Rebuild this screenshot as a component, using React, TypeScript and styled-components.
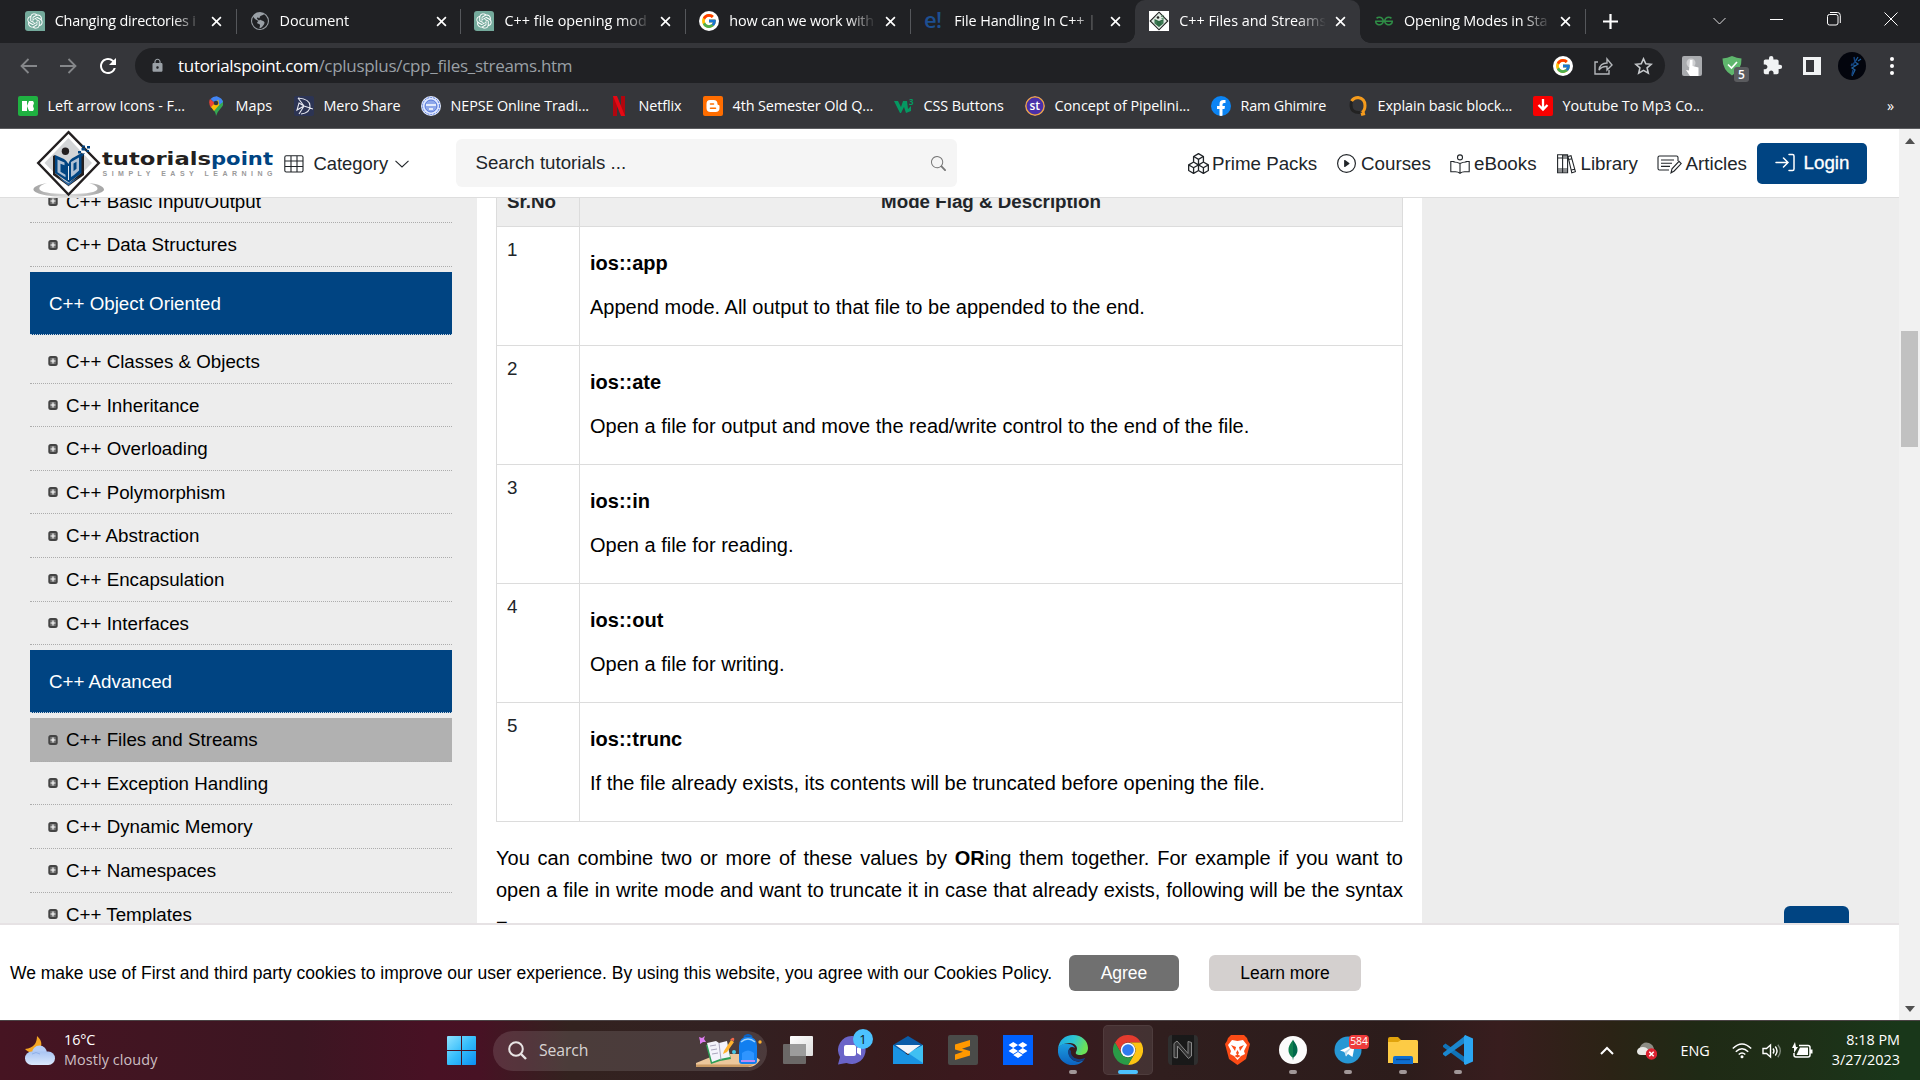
import React from 'react';
import styled, { createGlobalStyle, css } from 'styled-components';
import { SiOpenai, SiGeeksforgeeks, SiDropbox } from 'react-icons/si';
import { FcGoogle } from 'react-icons/fc';
import { BsBoxes, BsPlayCircle, BsSearch, BsGlobeAmericas } from 'react-icons/bs';
import { MdExtension, MdLock, MdRefresh } from 'react-icons/md';

const UI = `"Open Sans", "Noto Sans", sans-serif`;
const ARIAL = `"Liberation Sans", Arial, sans-serif`;
const NAVY = '#004482';

const Global = createGlobalStyle`
  * { box-sizing: border-box; }
  body { margin: 0; background: #202124; overflow: hidden; }
  svg { display: block; flex: none; }
`;

const Screen = styled.div`
  width: 1920px;
  height: 1080px;
  display: flex;
  flex-direction: column;
  overflow: hidden;
`;

const Slot = styled.span<{ $w: number; $c?: string }>`
  flex: none;
  width: ${p => p.$w}px;
  height: 100%;
  display: flex;
  align-items: center;
  justify-content: center;
  color: ${p => p.$c || '#fff'};
  position: relative;
`;

const Spacer = styled.span<{ $w?: number }>`
  flex: ${p => (p.$w ? `none` : 1)};
  width: ${p => p.$w || 0}px;
`;

/* ---------- Browser chrome ---------- */

const TabStrip = styled.div`
  flex: none;
  height: 43px;
  display: flex;
  align-items: stretch;
  padding: 0 1px 0 10.7px;
  background: #202124;
  font-family: ${UI};
`;

const Tab = styled.div<{ $active?: boolean; $sep?: boolean }>`
  position: relative;
  flex: none;
  width: 224.9px;
  display: flex;
  align-items: center;
  padding: 0 10px 1px 14px;
  ${p => p.$sep && css`
    &::after { content: ''; position: absolute; right: -1px; top: 9px; width: 1px; height: 25px; background: #55575b; }
  `}
  ${p => p.$active && css`
    background: #35363a;
    border-radius: 10px 10px 0 0;
    &::before, &::after { content: ''; position: absolute; bottom: 0; width: 10px; height: 10px; }
    &::before { left: -10px; background: radial-gradient(circle at 0 0, #202124 9.5px, #35363a 10px); }
    &::after { right: -10px; background: radial-gradient(circle at 100% 0, #202124 9.5px, #35363a 10px); }
  `}
`;

const TabIcon = styled.span`
  flex: none;
  width: 20px;
  height: 20px;
  margin-right: 10px;
  display: flex;
  align-items: center;
  justify-content: center;
`;

const TabTitle = styled.span<{ $ls?: number }>`
  flex: none;
  width: 147px;
  overflow: hidden;
  white-space: nowrap;
  font-size: 14.4px;
  line-height: 22px;
  letter-spacing: ${p => p.$ls ?? -0.2}px;
  color: #fff;
  mask-image: linear-gradient(90deg, #000 118px, transparent 147px);
`;

const TabClose = styled.span`
  margin-left: 9px;
`;

const Toolbar = styled.div`
  flex: none;
  height: 45px;
  padding: 0 8px;
  display: flex;
  align-items: center;
  background: #35363a;
  font-family: ${UI};
`;

const Omnibox = styled.div`
  flex: none;
  width: 1530px;
  height: 35px;
  margin-left: 7px;
  padding: 0 2px 0 15px;
  border-radius: 18px;
  display: flex;
  align-items: center;
  background: #202124;
`;

const Url = styled.span`
  margin-left: 13px;
  font-size: 17px;
  letter-spacing: -0.3px;
  white-space: nowrap;
  color: #9aa0a6;
  b { font-weight: 400; color: #fff; }
`;

const ExtBadge = styled.span`
  position: absolute;
  left: 22px;
  top: 24px;
  width: 15px;
  height: 15px;
  border-radius: 3px;
  background: #5a5b5e;
  color: #fff;
  font: 600 12px/15px ${UI};
  text-align: center;
`;

const Bookmarks = styled.div`
  flex: none;
  height: 41px;
  padding: 0 19px 4px 18px;
  display: flex;
  align-items: center;
  background: #35363a;
  border-bottom: 1px solid #5c5d60;
  font-family: ${UI};
`;

const Bookmark = styled.div<{ $w: number; $ls?: number }>`
  flex: none;
  width: ${p => p.$w}px;
  display: flex;
  align-items: center;
  gap: 9.5px;
  font-size: 14.4px;
  line-height: 22px;
  letter-spacing: ${p => p.$ls ?? -0.1}px;
  white-space: nowrap;
  color: #fff;
`;

const BmIcon = styled.span<{ $bg?: string; $round?: boolean }>`
  flex: none;
  width: 20px;
  height: 20px;
  display: flex;
  align-items: center;
  justify-content: center;
  overflow: hidden;
  border-radius: ${p => (p.$round ? '50%' : '2px')};
  background: ${p => p.$bg || 'transparent'};
`;

/* ---------- Page ---------- */

const Viewport = styled.div`
  flex: none;
  height: 891px;
  display: flex;
  font-family: ${ARIAL};
  font-size: 18.75px;
  color: #000;
`;

const Page = styled.div`
  width: 1899px;
  height: 891px;
  display: flex;
  flex-direction: column;
  background: #ededed;
`;

const Header = styled.header`
  flex: none;
  height: 69px;
  padding-left: 30px;
  display: flex;
  align-items: center;
  background: #fff;
  border-bottom: 1px solid #dedede;
  color: #212529;
  white-space: nowrap;
`;

const Category = styled.div`
  width: 172px;
  margin-left: 8px;
  padding-top: 1px;
  display: flex;
  align-items: center;
  gap: 9.5px;
  font-size: 18.4px;
  svg:last-child { margin-left: -3px; }
`;

const SearchBox = styled.div`
  flex: none;
  width: 501px;
  height: 48px;
  padding: 0 11px 0 19.5px;
  border-radius: 6px;
  display: flex;
  align-items: center;
  justify-content: space-between;
  background: #f5f5f5;
  font-size: 18.7px;
`;

const NavLink = styled.div<{ $w: number; $gap: number }>`
  flex: none;
  width: ${p => p.$w}px;
  padding-top: 1px;
  display: flex;
  align-items: center;
  gap: ${p => p.$gap}px;
`;

const LoginButton = styled.div`
  flex: none;
  width: 110px;
  height: 41px;
  border-radius: 5px;
  display: flex;
  align-items: center;
  justify-content: center;
  gap: 8px;
  background: ${NAVY};
  color: #fff;
  -webkit-text-stroke: 0.3px #fff;
`;

const Body = styled.div`
  flex: none;
  height: 725px;
  display: flex;
  overflow: hidden;
`;

const Sidebar = styled.nav`
  flex: none;
  width: 477px;
  padding: 0 25px 0 30px;
`;

const Menu = styled.div`
  margin-top: -18.2px;
`;

const MenuItem = styled.div<{ $active?: boolean }>`
  height: 43.57px;
  padding-left: 18px;
  display: flex;
  align-items: center;
  gap: 8px;
  border-bottom: 1px dotted #acacac;
  background: ${p => (p.$active ? '#b1b1b1' : 'transparent')};
  span { padding-top: 1.5px; }
`;

const MenuHeading = styled.div`
  height: 63px;
  margin: 5.1px 0;
  padding: 1.5px 0 0 19px;
  display: flex;
  align-items: center;
  background: ${NAVY};
  border-bottom: 1px dotted #c8d4e0;
  color: #fff;
`;

const Article = styled.main`
  flex: none;
  width: 945px;
  padding: 0 19px;
  background: #fff;
`;

const ModeTable = styled.div`
  width: 907px;
  border: 1px solid #dcdcdc;
  border-top: 0;
`;

const Row = styled.div<{ $head?: boolean }>`
  height: ${p => (p.$head ? 29 : 119)}px;
  display: grid;
  grid-template-columns: 83px 1fr;
  border-bottom: 1px solid #dcdcdc;
  background: ${p => (p.$head ? '#eee' : '#fff')};
  color: #212529;
  &:last-child { border-bottom: 0; height: 118px; }
`;

const HeadCell = styled.div<{ $center?: boolean }>`
  height: 28px;
  margin-top: -10px;
  padding: 0 10px;
  line-height: 28px;
  font-weight: 700;
  text-align: ${p => (p.$center ? 'center' : 'left')};
`;

const HeadWrap = styled.div<{ $line?: boolean }>`
  overflow: hidden;
  border-right: ${p => (p.$line ? '1px solid #dcdcdc' : '0')};
`;

const NumCell = styled.div`
  padding: 9px 10px;
  line-height: 28px;
  border-right: 1px solid #dcdcdc;
`;

const DescCell = styled.div`
  padding: 20px 10px;
  color: #000;
  font-size: 20px;
  line-height: 32px;
  b { display: block; margin-bottom: 12px; }
`;

const Paragraph = styled.p`
  width: 907px;
  margin: 20px 0 0;
  font-size: 20px;
  line-height: 32px;
  text-align: justify;
`;

const Aside = styled.aside`
  flex: 1;
  display: flex;
  align-items: flex-end;
  justify-content: flex-end;
  padding-right: 50px;
`;

const TopButton = styled.div`
  width: 65px;
  height: 17px;
  border-radius: 6px 6px 0 0;
  background: ${NAVY};
`;

const CookieBar = styled.div`
  flex: none;
  height: 97px;
  padding-left: 10px;
  display: flex;
  align-items: center;
  background: #fff;
  border-top: 2px solid #e6e2e4;
  font-size: 17.5px;
  white-space: nowrap;
`;

const CookieText = styled.span`
  flex: none;
  width: 1059px;
  padding-top: 2px;
`;

const CookieButton = styled.div<{ $primary?: boolean }>`
  flex: none;
  width: ${p => (p.$primary ? 110 : 152)}px;
  height: 36px;
  margin-right: 30px;
  border-radius: 6px;
  line-height: 36px;
  text-align: center;
  background: ${p => (p.$primary ? '#707070' : '#d4d0cf')};
  color: ${p => (p.$primary ? '#fff' : '#000')};
`;

const Scrollbar = styled.div`
  width: 21px;
  padding: 9px 2px 8px 2px;
  display: flex;
  flex-direction: column;
  align-items: center;
  background: #f1f1f1;
`;

const Thumb = styled.div`
  width: 17px;
  height: 116px;
  margin: 187px 0 auto;
  background: #c1c1c1;
`;

/* ---------- Taskbar ---------- */

const Taskbar = styled.footer`
  flex: none;
  height: 60px;
  display: flex;
  align-items: center;
  padding-left: 25px;
  border-top: 1px solid #4b4345;
  background: linear-gradient(90deg, #461422 0, #3c1622 300px, #481124 430px, #471224 480px, #33221f 570px, #322122 720px, #381a1c 900px, #3c181e 1010px, #301e1e 1160px, #2c1c1b 1400px, #381d1e 1500px, #2b2315 1610px, #1f2a15 1700px, #1e2f17 1800px, #19371a 1900px);
  font-family: ${UI};
  font-size: 14.4px;
  letter-spacing: -0.1px;
  color: #fff;
  white-space: nowrap;
`;

const Weather = styled.div`
  width: 422px;
  display: flex;
  align-items: center;
  gap: 9px;
  line-height: 20px;
  div { padding-bottom: 2px; }
  span { color: #cdbfc3; letter-spacing: 0.1px; }
`;

const TaskSearch = styled.div`
  flex: none;
  width: 274px;
  height: 40px;
  margin: 0 3px 0 17px;
  padding: 0 5px 0 15px;
  border-radius: 20px;
  display: flex;
  align-items: center;
  background: rgba(255, 255, 255, 0.12);
  color: #d8d3d3;
  font-size: 15.8px;
  svg + span { margin-left: 12px; padding-bottom: 2px; flex: 1; }
`;

const TaskApp = styled.div<{ $active?: boolean }>`
  flex: none;
  position: relative;
  width: 55px;
  height: 59px;
  display: flex;
  align-items: center;
  justify-content: center;
  padding-bottom: 1px;
  ${p => p.$active && css`
    &::before { content: ''; position: absolute; inset: 4px 2.5px 5px; border-radius: 5px; background: rgba(255, 255, 255, 0.09); border: 1px solid rgba(255, 255, 255, 0.06); }
  `}
  svg { position: relative; }
`;

const RunMark = styled.span<{ $active?: boolean }>`
  position: absolute;
  bottom: 6px;
  width: ${p => (p.$active ? 20 : 8)}px;
  height: 4px;
  border-radius: 2px;
  background: ${p => (p.$active ? '#4cc2ff' : '#a19798')};
`;

const Badge = styled.span<{ $red?: boolean }>`
  position: absolute;
  top: ${p => (p.$red ? 14 : 8)}px;
  left: ${p => (p.$red ? 29 : 28)}px;
  height: ${p => (p.$red ? 14 : 20)}px;
  width: 20px;
  border-radius: ${p => (p.$red ? 4 : 10)}px;
  background: ${p => (p.$red ? '#ee3b3b' : '#4cc2ff')};
  color: ${p => (p.$red ? '#fff' : '#101820')};
  font-size: ${p => (p.$red ? 10.5 : 13)}px;
  line-height: ${p => (p.$red ? 13 : 20)}px;
  text-align: center;
`;

const Clock = styled.div`
  width: 79px;
  padding-bottom: 2px;
  text-align: right;
  line-height: 20px;
  letter-spacing: 0;
`;

const Lang = styled.span`
  padding-bottom: 1px;
`;

/* ---------- Drawings ---------- */

const X = () => (
  <svg width="11" height="11" viewBox="0 0 12 12" stroke="#fff" strokeWidth="1.8"><path d="M1.2 1.2l9.6 9.6M10.8 1.2l-9.6 9.6" /></svg>
);

const GptIcon = () => (
  <svg width="20" height="20" viewBox="0 0 20 20"><path d="M3 0h14a3 3 0 0 1 3 3v17H3a3 3 0 0 1-3-3V3a3 3 0 0 1 3-3z" fill="#74aa9c" /><g transform="translate(2.2 2.2)"><SiOpenai size={15.6} color="#fff" /></g></svg>
);

const GoogleIcon = () => (
  <svg width="20" height="20" viewBox="0 0 20 20"><circle cx="10" cy="10" r="10" fill="#fff" /><g transform="translate(1.7 1.7)"><FcGoogle size={16.6} /></g></svg>
);

const TpMark = () => (
  <>
    <path d="M38.5 3.2L68.8 34 38.5 65.5 8.2 34z" fill="#fff" stroke="#231f20" strokeWidth="2.4" />
    <path d="M38.5 9L62 34 38.5 58 14.5 34z" fill="#d3d5d7" />
    <path d="M23 27l2-1v18l13 11 13-11V24l3 1v21L38.5 57 23 46z" fill="#231f20" />
    <path d="M25 26l9 4q3 2 4.500 5 1-5 6-7l7-4v20l-12.500 9.500L25 44z" fill={NAVY} />
    <path d="M27.500 30.500l7 3v2.800l-4-1.600v8l5 3v2.500l-8-5zM41 33l8-4.500v13L44 46l-3 2z" fill="#aebfd3" />
    <path d="M43.500 34.500l3-1.800v7l-3 2.500z" fill={NAVY} />
    <path d="M38.500 37v14" stroke="#e6ebf1" strokeWidth="1" fill="none" />
    <path d="M28 48l10.500 8.500L49 48l-10.500 6z" fill="#2f6aa6" />
    <circle cx="35.4" cy="22.3" r="3.7" fill="#231f20" />
    <path d="M48 22h3v2.500h-3zM51.500 19h4v2.500h-4zM56.500 21h2.500v2h-2.500zM57 17h3v2.500h-3zM50 25.500l5-1.500-3 4zM52 16.500h3v1.800h-3z" fill={NAVY} />
  </>
);

const TpLogo = () => (
  <svg width="246" height="69" viewBox="0 0 246 69">
    <defs><linearGradient id="ring"><stop offset="0" stopColor="#a4a4a4" /><stop offset=".5" stopColor="#dcdcdc" /><stop offset="1" stopColor="#a4a4a4" /></linearGradient></defs>
    <path d="M17 54C7 56 3 58 3.500 61c2 4 16 7 34.500 7s34-3 36-7c.5-3-5-6-15-7 6 2 10 4 8 7-3 3-15 4-28 4s-26-1-29-4c-2-3 1-5 7-7z" fill="url(#ring)" />
    <TpMark />
    <text x="72" y="36" fontFamily="DejaVu Sans" fontWeight="700" fontSize="18.500" fill="#231f20" textLength="109" lengthAdjust="spacingAndGlyphs">tutorials</text>
    <text x="181" y="36" fontFamily="DejaVu Sans" fontWeight="700" fontSize="18.500" fill={NAVY} textLength="62" lengthAdjust="spacingAndGlyphs">point</text>
    <text x="72.500" y="47" fontFamily="Liberation Sans" fontWeight="700" fontSize="7" fill="#9a9a9a" textLength="170">SIMPLY EASY LEARNING</text>
  </svg>
);

const TpFavicon = () => (
  <svg width="20" height="20" viewBox="0 0 20 20"><path d="M0 0h20v20H0z" fill="#fff" /><path d="M10 1.200L18.800 10 10 18.800 1.200 10z" fill="#dfe9e2" stroke="#222" strokeWidth="1.100" /><path d="M5.500 8l4.500 2 4.500-2v4.500L10 16l-4.500-3.500z" fill="#2f6b46" /><circle cx="9" cy="6.500" r="1.300" fill="#222" /><path d="M12 5.500l2.500-1M12.500 7.500l3-.5M7 10v3M13 10v3" stroke="#4d8a61" /></svg>
);

const Bullet = () => (
  <svg width="10" height="10" viewBox="0 0 10 10"><rect x=".3" width="9.400" height="10" rx="2.500" fill="#444" /><path d="M2.300 2h5.400v6H2.300z" fill="#777" /><path d="M5 2.500v5M2.500 5h5" stroke="#fff" strokeWidth="1.100" /></svg>
);

const line = { fill: 'none', stroke: '#212529', strokeWidth: 1.1 } as const;

const ReaderIcon = () => (
  <svg width="20" height="20" viewBox="0 0 20 20" {...line}><circle cx="10" cy="3.400" r="2.500" /><path d="M10 9.500Q7 8 4 8v-.5H.8v10.200H5.500q2.500 0 4.500 1.500 2-1.500 4.500-1.500h4.700V7.500H16V8q-3 0-6 1.500zm0 0v9.500" /></svg>
);
const LibraryIcon = () => (
  <svg width="19" height="20" viewBox="0 0 19 20" {...line}><path d="M.6.8h5v18h-5zM5.600.8h5v18h-5zM.6 4h10M.6 15h10M.6 17h10M5.600 2h5M11 2.500l3-.8 4.400 16-3.600 1.100zM11.800 5.500l3.200-.8M14.300 16l3.400-.8" /></svg>
);
const ArticleIcon = () => (
  <svg width="25" height="20" viewBox="0 0 25 20" {...line}><path d="M21 7V3.500Q21 2 19.500 2h-17Q1 2 1 3.500v11Q1 16 2.500 16H12M4 6h13M4 9.200h11M4 12.400h9" /><path d="M14 18.800l1-4 7-7.500 2.200 2.300-7 7.400z" /></svg>
);
const LoginIcon = () => (
  <svg width="21" height="20" viewBox="0 0 21 20" fill="none" stroke="#fff" strokeWidth="1.500" strokeLinecap="round"><path d="M1 9.500h12M8.500 5l4.500 4.500L8.500 14M14 1.500h3.500q1.500 0 1.500 1.500v13q0 1.500-1.500 1.500H14" /></svg>
);

const GridIcon = () => (
  <svg width="20" height="18" viewBox="0 0 20 18" {...line}><rect x=".8" y=".8" width="18.200" height="16.200" rx="1.500" /><path d="M1 6h18M1 11.500h18M7 1v16M13 1v16" /></svg>
);

const WinLogo = () => (
  <svg width="29" height="29" viewBox="0 0 29 29"><defs><linearGradient id="win" x2="1" y2="1"><stop stopColor="#8fe3ff" /><stop offset=".5" stopColor="#35bdfb" /><stop offset="1" stopColor="#0a8ef2" /></linearGradient></defs><path d="M1 0h13v14H0V1q0-1 1-1zM15 0h13q1 0 1 1v13H15zM0 15h14v14H1q-1 0-1-1zM15 15h14v13q0 1-1 1H15z" fill="url(#win)" /></svg>
);

const WeatherIcon = () => (
  <svg width="30" height="30" viewBox="0 0 30 30"><defs><linearGradient id="cl" y2="1" x2="0"><stop stopColor="#a9c4f2" /><stop offset="1" stopColor="#dbe9fd" /></linearGradient></defs><path d="M12 0c6 5 6 12-1 16-5 2-9-1-11-3 9-1 12-6 12-13z" fill="#f5a623" /><circle cx="14.500" cy="17" r="7.500" fill="#b5cdf6" /><rect y="15.500" width="30" height="13.500" rx="6.700" fill="url(#cl)" /><path d="M7 18q4-3 8 0" stroke="#8fb0ea" fill="none" /></svg>
);

const SchoolArt = () => (
  <svg width="66" height="34" viewBox="0 0 66 34">
    <path d="M0 29L22 20h34l8 6q-4 6-10 7H0z" fill="#ecc79c" /><path d="M0 30.500h58l-6 2.500H0z" fill="#c99a64" />
    <path d="M10 11l10-2 4 2 7-2 4 16-11 2-9 3z" fill="#2e9e57" /><path d="M11 9l9-2 3 2 8-2 3 16-10 2-8 3z" fill="#f3f3fb" /><path d="M23 9l2 17M14 12l6-1M15 16l6-1M16 20l6-1" stroke="#a8a5bc" />
    <path d="M28 17l7-11 3 2-7 10-4 2z" fill="#ffb22e" /><path d="M34 6l2-2q3-1 2 3z" fill="#f0674a" />
    <path d="M48 3q4-4 8 0" stroke="#0b62c4" strokeWidth="2" fill="none" />
    <path d="M43 12q0-9 9-9.500 9 .5 9 9.500v15q0 3-3 3H46q-3 0-3-3z" fill="#117ff0" /><path d="M46 19q6-5 12 0v7H46z" fill="#2f95ff" /><path d="M45 8q7-6 14 0" stroke="#9bd2ff" strokeWidth="1.500" fill="none" /><path d="M45 27h14" stroke="#b98cf5" strokeWidth="2" />
    <path d="M3 3l3 1 3-2-1 3 2 3-3 0-3 2 0-3z" fill="#dd7cf0" /><circle cx="38" cy="18" r="2" fill="#47c9e8" /><circle cx="64" cy="8" r="1.700" fill="#ffb22e" />
  </svg>
);

const TaskView = () => (
  <svg width="30" height="28" viewBox="0 0 30 28"><defs><linearGradient id="tv" x2="1" y2="1"><stop stopColor="#fff" /><stop offset="1" stopColor="#ddd" /></linearGradient></defs><rect x="7" width="23" height="20" rx="1" fill="url(#tv)" /><rect y="8" width="23" height="20" rx="1" fill="#6b6867" /><path d="M7 8h16v12H7z" fill="#9c9c9c" /></svg>
);
const ChatIcon = () => (
  <svg width="29" height="29" viewBox="0 0 29 29"><path d="M14.500 0a14 14 0 1 1-6 27L0 28.500 2 21A14 14 0 0 1 14.500 0z" fill="#6a64c8" /><rect x="6" y="9" width="12" height="11" rx="2" fill="#fff" /><path d="M19 12l4-2.500v10L19 17z" fill="#fff" /></svg>
);
const MailIcon = () => (
  <svg width="30" height="28" viewBox="0 0 30 28"><path d="M0 9L15 0l15 9v8H0z" fill="#0a5ca8" /><path d="M0 9l15 10L30 9v19H0z" fill="#1a94e3" /><path d="M30 9v18L12 15l3 2z" fill="#3fc0f2" /><path d="M2.500 9h25L15 18z" fill="#f4f6f9" /></svg>
);
const SublimeIcon = () => (
  <svg width="30" height="30" viewBox="0 0 30 30"><rect width="30" height="30" rx="2" fill="#4a4b49" /><path d="M7 9.500L22 5v6l-8 2.800 8 2.200v4.500L7 25v-5.500l8-2.700-8-2.300z" fill="#ff9800" /></svg>
);
const DropboxIcon = () => (
  <svg width="30" height="30" viewBox="0 0 30 30"><path d="M0 0h30v30H0z" fill="#0061fe" /><g transform="translate(5.500 5.500)"><SiDropbox size={19} color="#fff" /></g></svg>
);
const EdgeIcon = () => (
  <svg width="30" height="30" viewBox="0 0 30 30"><defs><linearGradient id="e1" x2="1" y2=".3"><stop stopColor="#1ba6e8" /><stop offset=".55" stopColor="#2ec6d0" /><stop offset="1" stopColor="#6be157" /></linearGradient><linearGradient id="e2" x2="0" y2="1"><stop stopColor="#1c9de0" /><stop offset="1" stopColor="#0c62c0" /></linearGradient></defs><path d="M0 14C1 5 7 0 15 0c9 0 15 6 15 13 0 5-4 7-8 7-3 0-5-1-4-3 3-5-1-9-6-9C6 8 1 11 0 14z" fill="url(#e1)" /><path d="M0 14c1-4 6-6 10-5 4 0 6 2 7 4-5-3-8 2-6 7 2 5 8 9 15 5-3 4-7 5-11 5C6 30-1 23 0 14z" fill="url(#e2)" /><path d="M11 14c-3 6 3 14 12 12 2 0 4-2 4-3-6 3-15 0-14-7z" fill="#123f86" /></svg>
);
const ChromeIcon = () => (
  <svg width="30" height="30" viewBox="0 0 30 30"><path d="M2 7.500A15 15 0 0 1 28 7.500H15A7.500 7.500 0 0 0 8.500 18.700z" fill="#e33b2e" /><path d="M28 7.500A15 15 0 0 1 15 30l6.500-11.250A7.500 7.500 0 0 0 15 7.500z" fill="#fdc413" /><path d="M2 7.500l6.500 11.250A7.500 7.500 0 0 0 21.500 18.750L15 30A15 15 0 0 1 2 7.500z" fill="#2a9b47" /><circle cx="15" cy="15" r="7.300" fill="#fff" /><circle cx="15" cy="15" r="5.800" fill="#2f7af0" /></svg>
);
const NIcon = () => (
  <svg width="30" height="30" viewBox="0 0 30 30"><rect width="30" height="30" rx="4" fill="#2f2f2f" /><rect x="4" width="22" height="30" fill="#191919" /><path d="M6 22.500V8.500l3-2.500 11 12.500V6.500l3.500 1V21l-3 2.500L9.500 11v12z" fill="#333" stroke="#8a8a8a" strokeWidth="1" /></svg>
);
const MongoIcon = () => (
  <svg width="28" height="28" viewBox="0 0 28 28"><circle cx="14" cy="14" r="14" fill="#fbfbfb" /><path d="M14 3.500c1 2.500 4.500 5 4.500 10.500 0 4-2.500 6.500-4 7.500l-.5 3z" fill="#00684a" /><path d="M14 3.500c-1 2.500-4.500 5-4.500 10.500 0 4 2.500 6.500 4 7.500l.5 3z" fill="#10804f" /></svg>
);
const TelegramIcon = () => (
  <svg width="28" height="28" viewBox="0 0 28 28"><circle cx="14" cy="14" r="13.500" fill="#2797d4" /><path d="M6 14.500L21 8l-2.500 13-4.500-3-2 2.500-1.500-4.500z" fill="#fff" /><path d="M10.500 16L19 10l-6 7-1 3.500z" fill="#b8d9ec" /></svg>
);
const FolderIcon = () => (
  <svg width="30" height="27" viewBox="0 0 30 27"><path d="M0 2q0-2 2-2h8l3 3h15q2 0 2 2v8H0z" fill="#e0a30c" /><path d="M0 5h10l3-2h15q2 0 2 2v21H0z" fill="#fdcb45" /><path d="M5 27v-6q0-2 2-2h16q2 0 2 2v6z" fill="#0f6fd0" /><path d="M8 22.500h14" stroke="#0a478f" strokeWidth="1.300" /></svg>
);
const VsCodeIcon = () => (
  <svg width="30" height="30" viewBox="0 0 30 30"><path d="M0 10.500L2.500 8.500 23 23v6L0 12z" fill="#1073b8" /><path d="M0 19.500l2.500 2L23 7V0L0 18z" fill="#1b87cf" /><path d="M22 0l8 3.500v23L22 30l-1-1.500V1.500z" fill="#2ba6f2" /></svg>
);
const BraveFace = () => (
  <svg width="25" height="30" viewBox="0 0 25 30"><path d="M6 0h13l3 3 1 3 2 3-4 15-8.500 6L4 24 0 9l2-3 1-3z" fill="#fb4b16" /><path d="M7 5l5.500 1L18 5l4 5-3 6 1 3-4 2-3.500 4L9 21l-4-2 1-3-3-6z" fill="#fff" /><path d="M6 10l5 2-1 4zM19 10l-5 2 1 4zM12.500 15l1.500 3-1.500 2-1.500-2zM9.500 21l3-1.800 3 1.800-3 1.800z" fill="#fb4b16" /></svg>
);

/* ---------- Data ---------- */

const tabs: { title: string; icon: React.ReactNode; active?: boolean; sep?: boolean; ls?: number }[] = [
  { title: 'Changing directories i', icon: <GptIcon />, sep: true },
  { title: 'Document', icon: <BsGlobeAmericas size={18} color="#9aa0a6" />, sep: true, ls: -0.1 },
  { title: 'C++ file opening mod', icon: <GptIcon />, sep: true, ls: 0 },
  { title: 'how can we work with', icon: <GoogleIcon />, sep: true },
  { title: 'File Handling In C++ |', icon: <svg width="20" height="20"><text x="0" y="17" fontFamily="Open Sans" fontWeight="600" fontSize="22" fill="#1d4f91" textLength="18">e!</text></svg>, ls: -0.12 },
  { title: 'C++ Files and Streams', icon: <TpFavicon />, active: true, ls: 0 },
  { title: 'Opening Modes in Sta', icon: <SiGeeksforgeeks size={18} color="#2f8d46" />, sep: true },
];

const bookmarks: { label: string; w: number; icon: React.ReactNode; ls?: number }[] = [
  { label: 'Left arrow Icons - F...', w: 188, ls: -0.05, icon: <BmIcon $bg="#1fb141"><svg width="14" height="12"><path d="M1 1h5v10H1zM8 1h4l1 2-1 3 1 3-1 2H8L6 6z" fill="#fff" /></svg></BmIcon> },
  { label: 'Maps', w: 88, ls: 0, icon: <BmIcon><svg width="14" height="20" viewBox="0 0 14 20"><path d="M7 20Q7 16 2 11L12 3q5 4 0 9-4 4-5 8z" fill="#34a853" /><path d="M1 3l5 4-4 5Q-1 7 1 3z" fill="#ea4335" /><path d="M1.500 3Q4 0 8 .2L12 3 6 7z" fill="#4285f4" /><path d="M2 11l8-8 1 5-6 7z" fill="#fbbc04" /><path d="M9 1q4 1 5 5l-4 3z" fill="#4285f4" /><circle cx="7" cy="7" r="2.300" fill="#35363a" /></svg></BmIcon> },
  { label: 'Mero Share', w: 127, icon: <BmIcon $bg="#2c3454"><svg width="18" height="18" fill="none" stroke="#e6e8f0" strokeWidth="1.100"><path d="M3 1q12 1 12 8t-9 8M3 1l6 8-5 8M9 9l9 3M4 6l5 3-7 4z" /></svg></BmIcon> },
  { label: 'NEPSE Online Tradi...', w: 188, ls: -0.1, icon: <BmIcon $bg="#dfe8ff" $round><svg width="20" height="20" fill="none" stroke="#5577d8"><circle cx="10" cy="10" r="8.500" strokeDasharray="2 1" /><circle cx="10" cy="10" r="6" fill="#8fa8ea" /><path d="M5 9h10M8 13h4" stroke="#fff" strokeWidth="1.500" /></svg></BmIcon> },
  { label: 'Netflix', w: 94, icon: <BmIcon><svg width="12" height="20"><path d="M0 0h4v20H0zM8 0h4v20H8z" fill="#b1060f" /><path d="M0 0h4l8 20H8z" fill="#e50914" /></svg></BmIcon> },
  { label: '4th Semester Old Q...', w: 191, icon: <BmIcon $bg="#ff6d00"><svg width="14" height="14"><path d="M4 1h3.500q4 0 4 4 0 1 1 1t1 1v2q0 4-4 4H4.500Q.500 13 .500 9V5q0-4 3.500-4z" fill="#fff" /><path d="M4.500 5h3M4.500 9.300h5" stroke="#ff6d00" strokeWidth="1.600" strokeLinecap="round" /></svg></BmIcon> },
  { label: 'CSS Buttons', w: 131, icon: <BmIcon><svg width="20" height="20"><path d="M0 5h4l3 6 2-6h4l1 8 3-3v5l-5 2-2-6-3 6H6z" fill="#059862" /><text x="15" y="9" fontFamily="Open Sans" fontSize="8" fontWeight="700" fill="#059862">3</text></svg></BmIcon> },
  { label: 'Concept of Pipelini...', w: 186, ls: -0.05, icon: <BmIcon $bg="#4a2fa8" $round><svg width="20" height="20"><circle cx="10" cy="10" r="9.200" fill="none" stroke="#eda93c" strokeWidth="1.500" /><text x="4.500" y="14" fontFamily="Open Sans" fontWeight="600" fontSize="12" fill="#fff">st</text></svg></BmIcon> },
  { label: 'Ram Ghimire', w: 137, ls: -0.2, icon: <BmIcon $bg="#0b84f3" $round><svg width="20" height="20"><path d="M8.500 20v-7H6v-3h2.500V8q0-4 4-4h2v3h-1.500q-1.500 0-1.500 1.500V10H14l-.5 3h-2v7z" fill="#fff" /></svg></BmIcon> },
  { label: 'Explain basic block...', w: 185, icon: <BmIcon><svg width="20" height="20" fill="none" strokeWidth="3"><path d="M12 16.500Q3 17 3 9q0-3 1-4" stroke="#222" /><path d="M3.500 5Q6 1.500 10 1.500q7 1 7 8 0 5-3 7" stroke="#f59b1c" /><path d="M13 18.500l4-1" stroke="#f59b1c" /></svg></BmIcon> },
  { label: 'Youtube To Mp3 Co...', w: 200, icon: <BmIcon $bg="#f80000"><svg width="14" height="14" stroke="#fff" strokeWidth="2.300" fill="none"><path d="M7 0v10M2.500 6L7 10.500 11.500 6" /></svg></BmIcon> },
];

const menu: { label: string; heading?: boolean; active?: boolean }[] = [
  { label: 'C++ Basic Input/Output' },
  { label: 'C++ Data Structures' },
  { label: 'C++ Object Oriented', heading: true },
  { label: 'C++ Classes & Objects' },
  { label: 'C++ Inheritance' },
  { label: 'C++ Overloading' },
  { label: 'C++ Polymorphism' },
  { label: 'C++ Abstraction' },
  { label: 'C++ Encapsulation' },
  { label: 'C++ Interfaces' },
  { label: 'C++ Advanced', heading: true },
  { label: 'C++ Files and Streams', active: true },
  { label: 'C++ Exception Handling' },
  { label: 'C++ Dynamic Memory' },
  { label: 'C++ Namespaces' },
  { label: 'C++ Templates' },
];

const modes = [
  ['ios::app', 'Append mode. All output to that file to be appended to the end.'],
  ['ios::ate', 'Open a file for output and move the read/write control to the end of the file.'],
  ['ios::in', 'Open a file for reading.'],
  ['ios::out', 'Open a file for writing.'],
  ['ios::trunc', 'If the file already exists, its contents will be truncated before opening the file.'],
];

const apps: { icon: React.ReactNode; run?: boolean; active?: boolean; badge?: string; red?: boolean }[] = [
  { icon: <TaskView /> },
  { icon: <ChatIcon />, badge: '1' },
  { icon: <MailIcon /> },
  { icon: <SublimeIcon /> },
  { icon: <DropboxIcon /> },
  { icon: <EdgeIcon />, run: true },
  { icon: <ChromeIcon />, run: true, active: true },
  { icon: <NIcon /> },
  { icon: <BraveFace /> },
  { icon: <MongoIcon />, run: true },
  { icon: <TelegramIcon />, run: true, badge: '584', red: true },
  { icon: <FolderIcon />, run: true },
  { icon: <VsCodeIcon />, run: true },
];

export default function App() {
  return (
    <Screen>
      <Global />
      <TabStrip>
        {tabs.map(t => (
          <Tab key={t.title} $active={t.active} $sep={t.sep}>
            <TabIcon>{t.icon}</TabIcon>
            <TabTitle $ls={t.ls}>{t.title}</TabTitle>
            <TabClose><X /></TabClose>
          </Tab>
        ))}
        <Slot $w={52}><svg width="15" height="15" stroke="#fff" strokeWidth="2.200"><path d="M7.500 0v15M0 7.500h15" /></svg></Slot>
        <Spacer />
        <Slot $w={57}><svg width="13" height="18" fill="none" stroke="#ddd"><path d="M.5 5l6 6 6-6" /></svg></Slot>
        <Slot $w={57}><svg width="13" height="8" stroke="#fff"><path d="M0 1.500h13" /></svg></Slot>
        <Slot $w={57}><svg width="14" height="19" fill="none" stroke="#fff"><rect x=".5" y="2.500" width="10.500" height="10.500" rx="2" /><path d="M3 .5h7.500q2.800 0 2.800 3V11" /></svg></Slot>
        <Slot $w={57}><svg width="14" height="19" stroke="#fff"><path d="M.5.500l13 13M13.500.500l-13 13" /></svg></Slot>
      </TabStrip>

      <Toolbar>
        <Slot $w={40}><svg width="17" height="16" fill="none" stroke="#85878a" strokeWidth="1.800"><path d="M17 8H1.500M8.500 1L1.500 8l7 7" /></svg></Slot>
        <Slot $w={40}><svg width="17" height="16" fill="none" stroke="#85878a" strokeWidth="1.800"><path d="M0 8h15.500M8.500 1l7 7-7 7" /></svg></Slot>
        <Slot $w={40}><MdRefresh size={24} /></Slot>
        <Omnibox>
          <MdLock size={15} color="#9aa0a6" />
          <Url><b>tutorialspoint.com</b>/cplusplus/cpp_files_streams.htm</Url>
          <Spacer />
          <Slot $w={40}><GoogleIcon /></Slot>
          <Slot $w={40}><svg width="19" height="18" fill="none" stroke="#b4b7bb" strokeWidth="1.400"><path d="M4 5H1v12h14v-4M5 13q1-7 8-7V2l5 6-5 5V9.500Q8 9 5 13z" /></svg></Slot>
          <Slot $w={40}><svg width="19" height="18" viewBox="0 0 19 18" fill="none" stroke="#c6c9cc" strokeWidth="1.600"><path d="M9.500 1.800l2.300 5 5.400.5-4.100 3.600 1.200 5.300-4.800-2.800-4.800 2.800 1.200-5.300L1.800 7.300l5.400-.5z" /></svg></Slot>
        </Omnibox>
        <Spacer />
        <Slot $w={40}><svg width="20" height="20"><rect width="20" height="20" rx="2" fill="#a9abae" /><circle cx="9" cy="7" r="4.500" fill="#cfd0d2" /><path d="M8 4h2.500v6l6 1.500V20H8l-4-6 3 .5z" fill="#fff" /></svg></Slot>
        <Slot $w={40}><svg width="20" height="20"><path d="M10 0q5 2 9.500 2.500Q20 14 10 19.500.500 14 .500 2.500 5 2 10 0z" fill="#5fb76d" /><path d="M6 8.500l3.500 3.500L15 6" stroke="#fff" strokeWidth="1.700" fill="none" /></svg><ExtBadge>5</ExtBadge></Slot>
        <Slot $w={40} $c="#f1f3f4"><MdExtension size={21} /></Slot>
        <Slot $w={40}><svg width="18" height="18"><path d="M0 0h18v18H0z" fill="#f1f3f4" /><path d="M3 3h8v12H3z" fill="#35363a" /></svg></Slot>
        <Slot $w={40}><svg width="28" height="28"><circle cx="14" cy="14" r="14" fill="#03050d" /><path d="M20 5l-3 5 3 2-6 4 3 2-3 6M13 12l5 2M20 9l3-2" stroke="#1f5f9c" strokeWidth="1.300" fill="none" /><path d="M16 5l1 5-4 4M15 18l-1 5" stroke="#12407c" fill="none" strokeWidth="1.500" /></svg></Slot>
        <Slot $w={40}><svg width="4" height="18" fill="#fff"><circle cx="2" cy="2" r="2" /><circle cx="2" cy="9" r="2" /><circle cx="2" cy="16" r="2" /></svg></Slot>
      </Toolbar>

      <Bookmarks>
        {bookmarks.map(b => (
          <Bookmark key={b.label} $w={b.w} $ls={b.ls}>{b.icon}<span>{b.label}</span></Bookmark>
        ))}
        <Spacer />
        <Bookmark $w={14}>»</Bookmark>
      </Bookmarks>

      <Viewport>
        <Page>
          <Header>
            <TpLogo />
            <Category><GridIcon />Category<svg width="14" height="8" {...line}><path d="M.5.800L7 7l6.500-6.200" /></svg></Category>
            <SearchBox>Search tutorials ...<BsSearch size={15} color="#777" /></SearchBox>
            <Spacer />
            <NavLink $w={149} $gap={3}><BsBoxes size={21} />Prime Packs</NavLink>
            <NavLink $w={113} $gap={5}><BsPlayCircle size={19} />Courses</NavLink>
            <NavLink $w={107} $gap={4}><ReaderIcon />eBooks</NavLink>
            <NavLink $w={100} $gap={4.5}><LibraryIcon />Library</NavLink>
            <NavLink $w={100} $gap={3.5}><ArticleIcon />Articles</NavLink>
            <LoginButton><LoginIcon />Login</LoginButton>
            <Spacer $w={32} />
          </Header>
          <Body>
            <Sidebar>
              <Menu>
                {menu.map(m => m.heading
                  ? <MenuHeading key={m.label}>{m.label}</MenuHeading>
                  : <MenuItem key={m.label} $active={m.active}><Bullet /><span>{m.label}</span></MenuItem>)}
              </Menu>
            </Sidebar>
            <Article>
              <ModeTable>
                <Row $head>
                  <HeadWrap $line><HeadCell>Sr.No</HeadCell></HeadWrap>
                  <HeadWrap><HeadCell $center>Mode Flag &amp; Description</HeadCell></HeadWrap>
                </Row>
                {modes.map(([flag, text], i) => (
                  <Row key={flag}>
                    <NumCell>{i + 1}</NumCell>
                    <DescCell><b>{flag}</b>{text}</DescCell>
                  </Row>
                ))}
              </ModeTable>
              <Paragraph>
                You can combine two or more of these values by <b>OR</b>ing them together. For example if you want to open a file in write mode and want to truncate it in case that already exists, following will be the syntax −
              </Paragraph>
            </Article>
            <Aside><TopButton /></Aside>
          </Body>
          <CookieBar>
            <CookieText>We make use of First and third party cookies to improve our user experience. By using this website, you agree with our Cookies Policy.</CookieText>
            <CookieButton $primary>Agree</CookieButton>
            <CookieButton>Learn more</CookieButton>
          </CookieBar>
        </Page>
        <Scrollbar>
          <svg width="10" height="6"><path d="M5 0l5 6H0z" fill="#505050" /></svg>
          <Thumb />
          <svg width="10" height="6"><path d="M0 0h10L5 6z" fill="#505050" /></svg>
        </Scrollbar>
      </Viewport>

      <Taskbar>
        <Weather><WeatherIcon /><div>16°C<br /><span>Mostly cloudy</span></div></Weather>
        <WinLogo />
        <TaskSearch>
          <svg width="19" height="19" fill="none" stroke="#e8e4e4" strokeWidth="2"><circle cx="8" cy="8" r="6.800" /><path d="M13 13l5 5" strokeWidth="2.400" /></svg>
          <span>Search</span>
          <SchoolArt />
        </TaskSearch>
        {apps.map((a, i) => (
          <TaskApp key={i} $active={a.active}>
            {a.icon}
            {a.badge && <Badge $red={a.red}>{a.badge}</Badge>}
            {a.run && <RunMark $active={a.active} />}
          </TaskApp>
        ))}
        <Spacer />
        <Slot $w={40}><svg width="14" height="9" fill="none" stroke="#fff" strokeWidth="2"><path d="M1 8l6-6 6 6" /></svg></Slot>
        <Slot $w={40}><svg width="20" height="20"><path d="M3 6q3-6 9-4 5 2 5 7H3z" fill="#8d8d85" /><path d="M0 10q1-4 6-4 6 0 7 8H4q-4 0-4-4z" fill="#e9e9e6" /><circle cx="14.500" cy="13" r="5.700" fill="#dc2130" /><path d="M12.300 10.800l4.400 4.400M16.700 10.800l-4.400 4.400" stroke="#fff" strokeWidth="1.500" /></svg></Slot>
        <Slot $w={56}><Lang>ENG</Lang></Slot>
        <Slot $w={38}><svg width="20" height="16" fill="none" stroke="#fff" strokeWidth="1.500"><path d="M.8 5.500Q10-3.500 19.200 5.500M3.800 8.700q6.200-6 12.400 0M6.700 11.500q3.300-3 6.600 0" /><circle cx="10" cy="13.800" r="1.500" fill="#fff" stroke="none" /></svg></Slot>
        <Slot $w={22}><svg width="20" height="16" fill="none" stroke="#fff" strokeWidth="1.400"><path d="M1 5.500h3.500L8.500 2v12l-4-3.500H1z" /><path d="M11 5.500q2 2.500 0 5M13.300 3.500q3.500 4.500 0 9" /><path d="M15.800 1.800q5 6.200 0 12.400" stroke="#7b8577" /></svg></Slot>
        <Slot $w={38}><svg width="21" height="17" fill="none" stroke="#fff" strokeWidth="1.500"><path d="M7 3.500h9q2 0 2 2V13q0 2-2 2H4q-2 0-2-2v-2" /><path d="M8 5.500h8V13H4.500z" fill="#fff" stroke="none" /><path d="M18 7.500h2.500v4H18z" fill="#fff" stroke="none" /><path d="M3 0L0 6h2v5l4-6H4z" fill="#fff" stroke="none" /></svg></Slot>
        <Clock>8:18 PM<br />3/27/2023</Clock>
        <Spacer $w={20} />
      </Taskbar>
    </Screen>
  );
}
